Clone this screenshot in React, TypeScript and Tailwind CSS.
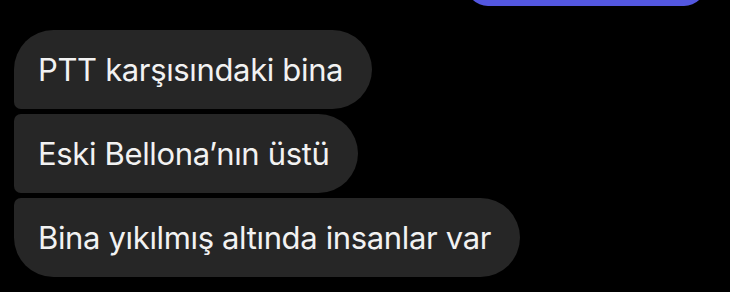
const messages = [
  { id: 1, text: "PTT karşısındaki bina", corners: "rounded-tl-[40px] rounded-bl-[7px]" },
  { id: 2, text: "Eski Bellona’nın üstü", corners: "rounded-tl-[7px] rounded-bl-[7px]" },
  { id: 3, text: "Bina yıkılmış altında insanlar var", corners: "rounded-tl-[7px] rounded-bl-[40px]" },
]

export default function App() {
  return (
    <div className="w-[730px] h-[292px] bg-black overflow-hidden font-['Inter',sans-serif]">
      <div className="flex justify-end pr-[24px]">
        <div className="w-[240px] h-[79px] -mt-[73px] rounded-[22px] bg-[#5357e0]"></div>
      </div>

      <div className="flex flex-col items-start gap-[5px] pl-[14px] mt-[24px]">
        {messages.map((m) => (
          <div
            key={m.id}
            className={`h-[79px] flex items-center pl-[24px] pr-[29px] bg-[#262626] rounded-r-[40px] ${m.corners}`}
          >
            <span className="text-[31px] text-[#f2f2f2] leading-none tracking-[-0.35px]">{m.text}</span>
          </div>
        ))}
      </div>
    </div>
  )
}
